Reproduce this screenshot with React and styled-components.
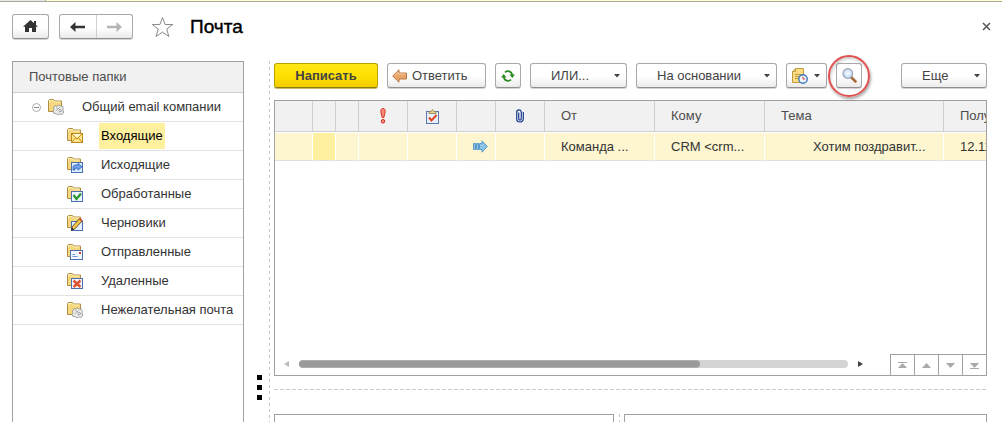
import React from 'react';
import styled, { createGlobalStyle, css } from 'styled-components';

const GlobalStyle = createGlobalStyle`
  *, *::before, *::after { box-sizing: border-box; }
  body {
    margin: 0;
    background: #fff;
    color: #333;
    font-family: "Liberation Sans", Arial, sans-serif;
    font-size: 13px;
    line-height: 16px;
    overflow: hidden;
  }
  button { font: inherit; color: inherit; margin: 0; padding: 0; cursor: pointer; }
  svg { display: block; flex: none; }
`;

const line = '#a0a0a0';

const Page = styled.div`
  display: flex;
  flex-direction: column;
  height: 100vh;
`;

const TabStrip = styled.div`
  display: flex;
  flex: none;
  height: 2px;
  background: #ffffcf;
  border-bottom: 1px solid #a9a99b;
`;

const InactiveTab = styled.div`
  width: 46px;
  background: #e8e8e8;
  border-right: 1px solid ${line};
`;

const Header = styled.header`
  display: flex;
  align-items: center;
  flex: none;
  height: 59px;
  padding: 0 11px 10px 12px;
`;

const raised = css`
  border: 1px solid #a8a8a8;
  border-bottom-color: #8f8f8f;
  border-radius: 3px;
  background: linear-gradient(#fff 0%, #fff 55%, #ebebeb 100%);
  box-shadow: 0 1px 0 #d4d4d4;
`;

const HomeButton = styled.button`
  ${raised}
  display: flex;
  align-items: center;
  justify-content: center;
  width: 37px;
  height: 25px;
  margin-right: 10px;
`;

const NavGroup = styled.div`
  ${raised}
  display: flex;
  width: 74px;
  height: 25px;
  margin-right: 18px;
`;

const NavButton = styled.button`
  display: flex;
  align-items: center;
  justify-content: center;
  flex: 1;
  border: 0;
  background: none;
  & + & { border-left: 1px solid #d0d0d0; }
`;

const PlainButton = styled.button`
  display: flex;
  align-items: center;
  justify-content: center;
  border: 0;
  background: none;
`;

const Title = styled.h1`
  flex: 1;
  margin: 0 0 0 16px;
  font-size: 19px;
  line-height: 24px;
  font-weight: 400;
  color: #000;
  -webkit-text-stroke: 0.4px #000;
`;

const Body = styled.main`
  display: flex;
  flex: 1;
  min-height: 0;
  padding: 0 15px 0 12px;
`;

const Folders = styled.nav`
  flex: none;
  width: 232px;
  border: 1px solid ${line};
  border-bottom: 0;
`;

const FoldersTitle = styled.h2`
  margin: 0;
  padding: 7px 16px;
  height: 31px;
  border-bottom: 1px solid #cfcfcf;
  background: #f1f1f1;
  color: #4d4d4d;
  font-size: 13px;
  font-weight: 400;
`;

const FolderList = styled.ul`
  margin: 0;
  padding: 0;
  list-style: none;
`;

const FolderRow = styled.li`
  display: flex;
  align-items: center;
  height: 29px;
  padding-left: ${({ $root }) => ($root ? 19 : 54)}px;
  border-bottom: 1px solid #e2e2e2;
`;

const Toggle = styled(PlainButton)`
  width: 9px;
  height: 9px;
  margin-right: 7px;
`;

const FolderName = styled.button`
  height: 26px;
  margin-left: 16px;
  padding: 0 2px;
  border: 0;
  background: ${({ $selected }) => ($selected ? '#fff0a0' : 'none')};
  color: ${({ $selected }) => ($selected ? '#000' : '#333')};
  white-space: nowrap;
`;

const Splitter = styled.div`
  display: flex;
  flex-direction: column;
  flex: none;
  gap: 5px;
  width: 30px;
  padding: 314px 0 0 13px;
  border-right: 4px solid transparent;
  background: repeating-linear-gradient(#c8c8c8 0 3px, transparent 3px 6px) right / 1px 100% no-repeat;
`;

const SplitterDot = styled.span`
  width: 5px;
  height: 5px;
  background: #000;
`;

const Mail = styled.section`
  display: flex;
  flex-direction: column;
  flex: 1;
  min-width: 0;
`;

const Toolbar = styled.div`
  display: flex;
  flex: none;
  gap: 9px;
  padding: 2px 0 12px;
`;

const ToolButton = styled.button`
  ${raised}
  display: flex;
  align-items: center;
  justify-content: center;
  gap: 4px;
  flex: none;
  width: ${({ $width }) => $width}px;
  height: 25px;
  color: #444;
  white-space: nowrap;
`;

const PrimaryButton = styled(ToolButton)`
  border-color: #b8a000;
  border-bottom-color: #8a7a10;
  background: linear-gradient(#ffe817 0%, #ffe100 50%, #f3ce00 100%);
  box-shadow: 0 1px 0 #c9b96a;
  font-weight: 700;
`;

const IconTextButton = styled(ToolButton)`
  justify-content: flex-start;
  padding-left: 4px;
`;

const MenuButton = styled(ToolButton)`
  justify-content: space-between;
  padding: 0 6px 0 ${({ $inset }) => $inset}px;
`;

const Pusher = styled.div`
  flex: 1;
`;

const SearchSlot = styled.div`
  position: relative;
`;

const Highlight = styled.span`
  position: absolute;
  left: 50%;
  top: 50%;
  width: 42px;
  height: 42px;
  transform: translate(-50%, -50%);
  border: 2px solid #e05050;
  border-radius: 50%;
  box-shadow: 1px 2px 3px rgba(0, 0, 0, 0.35), inset 1px 2px 3px rgba(0, 0, 0, 0.2);
  pointer-events: none;
`;

const Panel = styled.div`
  display: flex;
  flex-direction: column;
  flex: none;
  height: 276px;
  border: 1px solid ${line};
`;

const Letters = styled.table`
  width: 100%;
  table-layout: fixed;
  border-collapse: separate;
  border-spacing: 0;
`;

const HeadCell = styled.th`
  height: 31px;
  padding: 0 0 0 ${({ $icon }) => ($icon ? 0 : 16)}px;
  border-right: 1px solid #cfcfcf;
  border-bottom: 1px solid #cfcfcf;
  background: #f1f1f1;
  color: #4d4d4d;
  font-weight: 400;
  text-align: left;
  white-space: nowrap;
  overflow: hidden;
  &:last-child { border-right: 0; }
  svg { margin: 0 auto; }
`;

const Cell = styled.td`
  height: 29px;
  padding: 0 0 0 ${({ $inset = 0 }) => $inset}px;
  border: 0 solid #fff;
  border-top-width: 1px;
  border-right-width: 1px;
  border-bottom: 1px solid #e0e0e0;
  background: ${({ $current }) => ($current ? '#fff0a0' : '#fdf6d0')};
  white-space: nowrap;
  overflow: hidden;
  &:last-child { border-right: 0; }
  svg { margin: 0 auto; }
`;

const PanelFooter = styled.div`
  display: flex;
  align-items: flex-start;
  height: 21px;
  margin-top: auto;
  padding-left: 9px;
`;

const Scrollbar = styled.div`
  display: flex;
  align-items: center;
  flex: 1;
  gap: 10px;
  padding: 6px 27px 0 0;
`;

const Track = styled.div`
  flex: 1;
  height: 8px;
  border-radius: 4px;
  background: #d4d4d4;
`;

const Thumb = styled.div`
  width: 73%;
  height: 8px;
  border: 1px solid #adadad;
  border-width: 1px 0;
  border-radius: 4px;
  background: #999;
`;

const JumpButton = styled(PlainButton)`
  width: 24px;
  height: 21px;
  border: 1px solid ${line};
  border-width: 1px 0 0 1px;
`;

const RowSplitter = styled.div`
  flex: none;
  height: 1px;
  margin: 13px 0 24px;
  background: repeating-linear-gradient(90deg, #c8c8c8 0 4px, transparent 4px 6px);
`;

const Previews = styled.div`
  display: flex;
  flex: 1;
  min-height: 0;
`;

const Preview = styled.div`
  flex: ${({ $share }) => $share};
  border: 1px solid ${line};
  border-bottom: 0;
`;

const PreviewSplitter = styled.div`
  width: 10px;
  background: repeating-linear-gradient(#c8c8c8 0 3px, transparent 3px 6px) center / 1px 100% no-repeat;
`;

const Caret = () => (
  <svg width="6" height="4" viewBox="0 0 6 4"><path d="M0 0h6L3 3.6z" fill="#444" /></svg>
);

const badges = {
  group: (
    <g stroke="#8b8b8b" strokeWidth=".8" fill="#ededed">
      <path d="m5.500 9 1.500-2.500 2 .8 1.500-1.300 2 1 2 .2.800 2.300-.5 1.500 1 2-1.500 2.300-2.800-.3-1.700.8-1.800-1.300-2.200-.2-.8-2.300 1-1.300z" />
      <path d="M8 8.500 10 10l2-2M7.500 12l2.200-1.500M11 13.500l2-2 1.200 1" fill="none" stroke="#9c9c9c" />
      <circle cx="12" cy="11.500" r="1.200" fill="#fff" />
    </g>
  ),
  inbox: (
    <g>
      <rect x="4.500" y="5.500" width="11" height="9" fill="#ffe48a" stroke="#bd8a22" />
      <path d="m5 6 5 5 5-5M5 14l3.700-4.200M15 14l-3.700-4.200" fill="none" stroke="#cc8f20" />
      <path d="m6 6 4 3.800L14 6z" fill="#fff7cf" />
    </g>
  ),
  outbox: (
    <g>
      <rect x="4.500" y="5.500" width="11" height="10" fill="#dfeeff" stroke="#4c6faf" />
      <path d="M6 13V9.500L7.500 8H11V6.300l4 3.500-4 3.400v-2H8V13z" fill="#6fa3ee" stroke="#285cc0" strokeWidth=".8" />
    </g>
  ),
  done: (
    <g>
      <rect x="4.500" y="5.500" width="11" height="10" fill="#edf5ff" stroke="#4c6faf" />
      <path d="m6.500 9 3 4 4.500-5.500" fill="none" stroke="#2d962f" strokeWidth="2.300" />
    </g>
  ),
  draft: (
    <g>
      <rect x="4.500" y="6.500" width="11" height="9" fill="#e3efff" stroke="#4c6faf" />
      <path d="m4.500 15 1-3.600 7.200-8 2.600 2.300-7.400 8.100z" fill="#f5c64a" stroke="#554119" strokeWidth=".9" />
      <path d="m12 4.300 1.200-1.200 2.100 2-1.100 1.200z" fill="#d44b36" />
      <path d="m4.200 15.500.8-2.500 1.800 1.600z" fill="#111" />
    </g>
  ),
  sent: (
    <g>
      <rect x="3.500" y="6.500" width="12" height="9" fill="#f2f7ff" stroke="#4c6faf" />
      <path d="M5.500 12.500h5M5.500 10.500H8" stroke="#6f93cf" />
      <path d="M12 8h2v2h-2z" fill="#dc3b2d" />
    </g>
  ),
  deleted: (
    <g>
      <rect x="4.500" y="5.500" width="11" height="10" fill="#f3f7ff" stroke="#4c6faf" />
      <path d="m6.500 7.500 7 6.500m0-6.500-7 6.500" stroke="#e0502c" strokeWidth="2.400" />
    </g>
  ),
};

const FolderIcon = ({ kind }) => (
  <svg width="16" height="16" viewBox="0 0 16 16" aria-hidden="true">
    <path d="M.5 12.500v-11l1-1h4l1.200 1.500h6.800v10.500z" fill="#f5d77d" stroke="#b08d45" />
    <path d="M1.500 4V1.500h3.800L6.500 3h6" fill="none" stroke="#fff0b5" />
    {badges[kind]}
  </svg>
);

const folders = [
  ['inbox', 'Входящие'],
  ['outbox', 'Исходящие'],
  ['done', 'Обработанные'],
  ['draft', 'Черновики'],
  ['sent', 'Отправленные'],
  ['deleted', 'Удаленные'],
  ['group', 'Нежелательная почта'],
];

const columns = [38, 23, 23, 49, 49, 39, 49, 110, 110, 179];

const jumps = [
  ['В начало', 'M0 0h9v1H0zM4.500 1 9 6H0z'],
  ['Назад', 'M4.500 1 9 6H0z'],
  ['Вперед', 'M0 1h9L4.500 6z'],
  ['В конец', 'M0 1h9L4.500 6zM0 6h9v1H0z'],
];

export default function App() {
  return (
    <Page>
      <GlobalStyle />
      <TabStrip><InactiveTab /></TabStrip>
      <Header>
        <HomeButton aria-label="Домой">
          <svg width="15" height="13" viewBox="0 0 15 13">
            <path d="M7.500 0 15 6.700H13V12H9V8H6v4H2V6.700H0z" fill="#333" />
            <path d="M11 1h2v4h-2z" fill="#333" />
          </svg>
        </HomeButton>
        <NavGroup>
          <NavButton aria-label="Назад">
            <svg width="15" height="10" viewBox="0 0 15 10"><path d="M0 5 5.500 0v3.800H15v2.400H5.500V10z" fill="#333" /></svg>
          </NavButton>
          <NavButton aria-label="Вперед">
            <svg width="15" height="10" viewBox="0 0 15 10"><path d="M15 5 9.500 0v3.800H0v2.400h9.500V10z" fill="#b5b5b5" /></svg>
          </NavButton>
        </NavGroup>
        <PlainButton aria-label="В избранное">
          <svg width="23" height="22" viewBox="0 0 23 22">
            <path d="m11.500 1.500 2.600 7h7.600l-6 4.600 2.200 7.400-6.400-4.400-6.400 4.400 2.200-7.400-6-4.600h7.600z" fill="#fff" stroke="#8a8a8a" />
          </svg>
        </PlainButton>
        <Title>Почта</Title>
        <PlainButton aria-label="Закрыть">
          <svg width="9" height="9" viewBox="0 0 9 9"><path d="m1 1 7 7M8 1 1 8" stroke="#555" strokeWidth="1.500" /></svg>
        </PlainButton>
      </Header>
      <Body>
        <Folders>
          <FoldersTitle>Почтовые папки</FoldersTitle>
          <FolderList>
            <FolderRow $root>
              <Toggle aria-label="Свернуть">
                <svg width="9" height="9" viewBox="0 0 9 9"><circle cx="4.500" cy="4.500" r="4" fill="none" stroke="#aaa" /><path d="M2 4.500h5" stroke="#888" /></svg>
              </Toggle>
              <FolderIcon kind="group" />
              <FolderName>Общий email компании</FolderName>
            </FolderRow>
            {folders.map(([kind, name]) => (
              <FolderRow key={name}>
                <FolderIcon kind={kind} />
                <FolderName $selected={kind === 'inbox'}>{name}</FolderName>
              </FolderRow>
            ))}
          </FolderList>
        </Folders>
        <Splitter><SplitterDot /><SplitterDot /><SplitterDot /></Splitter>
        <Mail>
          <Toolbar>
            <PrimaryButton $width={104}>Написать</PrimaryButton>
            <IconTextButton $width={99}>
              <svg width="16" height="14" viewBox="0 0 16 14">
                <path d="M.700 7 7 .8V4h7.500v6H7v3.200z" fill="#e9a468" stroke="#b97743" />
                <path d="M2.500 7 6 3.500V5h7.500" fill="none" stroke="#f8d2ac" />
              </svg>
              Ответить
            </IconTextButton>
            <ToolButton $width={26} aria-label="Обновить">
              <svg width="14" height="12" viewBox="0 0 14 12">
                <path d="M4 2.300C6 .5 10.500.6 11.300 5M10 9.700C8 11.500 3.500 11.400 2.700 7" fill="none" stroke="#2c8a22" strokeWidth="1.700" />
                <path d="M8.500 4.500H14L11.300 8zM0 7.500h5.500L2.700 4z" fill="#2c8a22" />
              </svg>
            </ToolButton>
            <MenuButton $width={97} $inset={20}>ИЛИ...<Caret /></MenuButton>
            <MenuButton $width={141} $inset={20}>На основании<Caret /></MenuButton>
            <MenuButton $width={41} $inset={5} aria-label="Создать напоминание">
              <svg width="16" height="16" viewBox="0 0 16 16">
                <path d="M.500 14.500V3.500l3-3h8v14z" fill="#f9dc83" stroke="#c39b3c" />
                <path d="M.5 3.500h3v-3M3 6.500h6M3 8.500h4M3 10.500h3" fill="none" stroke="#c39b3c" />
                <circle cx="11" cy="11" r="4.200" fill="#eef5ff" stroke="#3f78bb" strokeWidth="1.400" />
                <path d="M11 8.500V11h2.200" fill="none" stroke="#d44232" />
              </svg>
              <Caret />
            </MenuButton>
            <SearchSlot>
              <ToolButton $width={26} aria-label="Найти">
                <svg width="15" height="15" viewBox="0 0 15 15">
                  <path d="m9 9 4.500 4.500" stroke="#a8683d" strokeWidth="2.600" strokeLinecap="round" />
                  <circle cx="5.800" cy="5.500" r="4.800" fill="#cfe3fa" stroke="#9aa0ac" strokeWidth="1.200" />
                  <path d="M5.800 3v5M3.300 5.500h5" stroke="#f4f9ff" strokeWidth="1.500" />
                </svg>
              </ToolButton>
              <Highlight />
            </SearchSlot>
            <Pusher />
            <MenuButton $width={86} $inset={20}>Еще<Caret /></MenuButton>
          </Toolbar>
          <Panel>
            <Letters>
              <colgroup>
                {columns.map((width, i) => <col key={i} style={{ width }} />)}
                <col />
              </colgroup>
              <thead>
                <tr>
                  <HeadCell /><HeadCell /><HeadCell />
                  <HeadCell $icon aria-label="Важность">
                    <svg width="6" height="16" viewBox="0 0 6 16"><path d="M3 .5C5.500.5 5.800 3 3.800 9.500H2.200C.2 3 .5.500 3 .5z" fill="#f58a7c" stroke="#d4301f" /><circle cx="3" cy="13.300" r="1.800" fill="#f58a7c" stroke="#d4301f" /></svg>
                  </HeadCell>
                  <HeadCell $icon aria-label="Задача">
                    <svg width="13" height="15" viewBox="0 0 13 15">
                      <rect x=".5" y="2.500" width="12" height="12" fill="#e9f0fc" stroke="#5b76ae" />
                      <path d="M3 4.500V2.500h2L6.500.5 8 2.500h2v2z" fill="#e9d58c" stroke="#8a7a4a" strokeWidth=".8" />
                      <path d="m3 8.500 2.500 3L10.500 6" fill="none" stroke="#e04425" strokeWidth="2" />
                    </svg>
                  </HeadCell>
                  <HeadCell />
                  <HeadCell $icon aria-label="Вложения">
                    <svg width="8" height="14" viewBox="0 0 8 14"><path d="M2.700 3.500v6.200c0 1.800 2.600 1.800 2.600 0V3C5.300.2.700.2.700 3v7c0 4 6.600 4 6.600 0V3" fill="none" stroke="#1b3a90" strokeWidth="1.200" /></svg>
                  </HeadCell>
                  <HeadCell>От</HeadCell>
                  <HeadCell>Кому</HeadCell>
                  <HeadCell>Тема</HeadCell>
                  <HeadCell>Получено</HeadCell>
                </tr>
              </thead>
              <tbody>
                <tr>
                  <Cell /><Cell $current /><Cell /><Cell /><Cell />
                  <Cell $inset={8}>
                    <svg width="15" height="13" viewBox="0 0 15 13"><path d="M.5 3.500h2v6h-2zM3.500 3.500h2v6h-2zM6.500 3.500H9V.800l5.300 5.700L9 12.200V9.500H6.500z" fill="#8cc4e8" stroke="#5b9bcb" /></svg>
                  </Cell>
                  <Cell />
                  <Cell $inset={16}>Команда ...</Cell>
                  <Cell $inset={16}>CRM &lt;crm...</Cell>
                  <Cell $inset={48}>Хотим поздравит...</Cell>
                  <Cell $inset={16}>12.11.2015</Cell>
                </tr>
              </tbody>
            </Letters>
            <PanelFooter>
              <Scrollbar>
                <svg width="5" height="6" viewBox="0 0 5 6"><path d="M5 0v6L0 3z" fill="#bbb" /></svg>
                <Track><Thumb /></Track>
                <svg width="5" height="6" viewBox="0 0 5 6"><path d="M0 0v6l5-3z" fill="#444" /></svg>
              </Scrollbar>
              {jumps.map(([label, d]) => (
                <JumpButton key={label} aria-label={label}>
                  <svg width="9" height="7" viewBox="0 0 9 7"><path d={d} fill="#aaa" /></svg>
                </JumpButton>
              ))}
            </PanelFooter>
          </Panel>
          <RowSplitter />
          <Previews>
            <Preview $share={340} />
            <PreviewSplitter />
            <Preview $share={363} />
          </Previews>
        </Mail>
      </Body>
    </Page>
  );
}
